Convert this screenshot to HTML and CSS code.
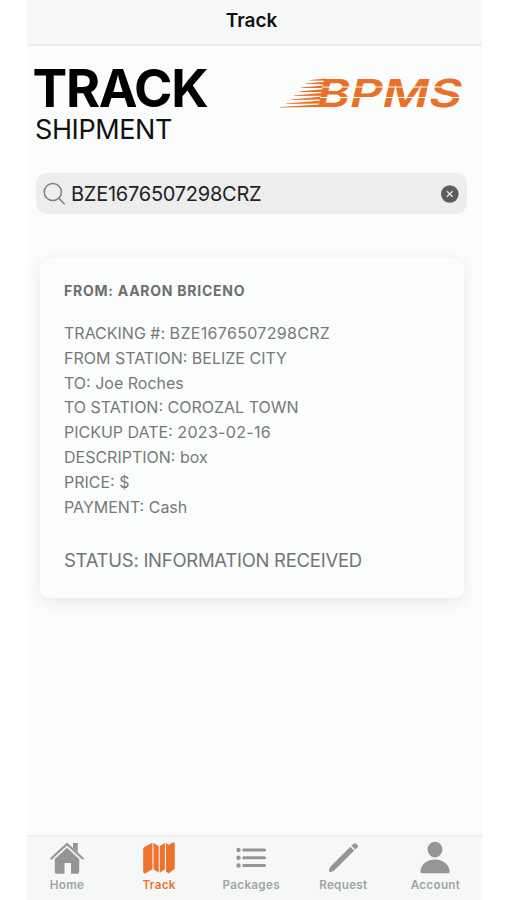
FILE: index.html
```html
<!DOCTYPE html>
<html lang="en">
<head>
<meta charset="utf-8">
<title>Track</title>
<link rel="stylesheet" href="styles.css">
</head>
<body>
<div class="app">
  <header class="navbar">Track</header>
  <main class="content">
    <div class="heading">
      <div class="titles">
        <h1>TRACK</h1>
        <p class="subtitle">SHIPMENT</p>
      </div>
      <svg class="logo" viewBox="0 0 184 32" width="184" height="32" aria-label="BPMS">
        <g fill="#ea7028">
          <path d="M31 3L47 1.400 46.500 3.700 31 3.500zM27 6.500L46 4.800 45.300 7.200 27 7zM22 10.500L45 8.400 44.300 10.900 22 11zM20 14.500L43.500 12.200 43 14.900 20 15zM15 18.500L42.500 16 42 18.700 15 19zM12 22.500L41.500 19.800 41 22.600 12 23zM7 26.500L40.500 23.800 40 26.500 7 27zM1 30L40 27.400 39.300 30 1 30.500z"/>
          <text class="logo-text" x="0" y="0" textLength="145" lengthAdjust="spacingAndGlyphs" transform="translate(35.500 29.600) skewX(-13)">BPMS</text>
        </g>
        <path d="M43 10H182M41 20.500H180" stroke="#fbfdfc" stroke-width="1"/>
      </svg>
    </div>
    <div class="search">
      <svg width="24" height="24" viewBox="0 0 24 24" fill="none" stroke="#7d7e7e" stroke-width="1.500" stroke-linecap="round"><circle cx="9.800" cy="10" r="8.600"/><path d="M15.900 16.400L21.200 21.700"/></svg>
      <span class="query">BZE1676507298CRZ</span>
      <svg class="clear" width="18" height="18" viewBox="0 0 18 18"><circle cx="8.800" cy="9" r="8.800" fill="#5c5d5d"/><path d="M6 6.200L11.600 11.800M11.600 6.200L6 11.800" stroke="#e8e8e8" stroke-width="1.300"/></svg>
    </div>
    <section class="card">
      <h2>FROM: AARON BRICENO</h2>
      <ul class="details">
        <li>TRACKING #: <span class="code">BZE1676507298CRZ</span></li>
        <li>FROM STATION: BELIZE CITY</li>
        <li>TO: Joe Roches</li>
        <li>TO STATION: COROZAL TOWN</li>
        <li>PICKUP DATE: <span class="code">2023-02-16</span></li>
        <li>DESCRIPTION: box</li>
        <li>PRICE: $</li>
        <li>PAYMENT: Cash</li>
      </ul>
      <p class="status">STATUS: INFORMATION RECEIVED</p>
    </section>
  </main>
  <nav class="tabs">
    <div class="tab">
      <svg width="36" height="36" viewBox="0 0 36 36"><path d="M24 3h4.800v9l-4.800-4z" fill="#949696"/><path d="M5.800 19L18 7.800 30.200 19V32q0 1.800-1.800 1.800H22V23H15.500V33.800H7.600Q5.800 33.800 5.800 32z" fill="#949696"/><path d="M2.300 18.500L18 4 33.700 18.500" fill="none" stroke="#949696" stroke-width="2.300" stroke-linecap="round" stroke-linejoin="round"/></svg>
      <span>Home</span>
    </div>
    <div class="tab active">
      <svg width="36" height="36" viewBox="0 0 36 36" fill="#ee7130"><path d="M11.400 2.700V29.300L4.500 33.200Q2.200 34 2.200 31.500V9Q2.200 7.600 3.400 6.900zM12.500 2.700L17.700 6.200V32.700L12.500 29.300zM18.800 6.200L23.900 2.700V29.300L18.800 32.700zM25 2.900L27.800 4.800 31.500 2.600Q33.800 1.800 33.800 4V27.700Q33.800 29 32.600 29.800L27.500 33.500 25 31.500z"/></svg>
      <span>Track</span>
    </div>
    <div class="tab">
      <svg width="36" height="36" viewBox="0 0 36 36" stroke="#949696" stroke-linecap="round"><path d="M10.800 10H31.500M10.800 17.700H31.500M10.800 25.500H31.500" stroke-width="3"/><path d="M5.500 10h.01M5.500 17.700h.01M5.500 25.500h.01" stroke-width="4.400"/></svg>
      <span>Packages</span>
    </div>
    <div class="tab">
      <svg width="36" height="36" viewBox="0 0 36 36" fill="#949696"><path d="M25.300 6.800L29.200 10.500 9.200 30.500 6.200 32Q3.500 32.500 4 29.800L5.300 26.800z"/><path d="M26.400 5.700L28 4.200Q30 2.700 32 4.500T32.200 7.800L30.400 9.500z"/></svg>
      <span>Request</span>
    </div>
    <div class="tab">
      <svg width="36" height="36" viewBox="0 0 36 36" fill="#949696"><ellipse cx="18" cy="9.600" rx="7.400" ry="7.800"/><path d="M3.300 31C4.600 23.600 10.500 19.600 18 19.600S31.400 23.600 32.700 31Q32.900 33.300 31 33.300H5Q3.100 33.300 3.300 31z"/></svg>
      <span>Account</span>
    </div>
  </nav>
</div>
</body>
</html>
```
FILE: styles.css
```css
* { box-sizing: border-box; }
body { margin: 0; background: #fff; font-family: Inter, "Liberation Sans", sans-serif; }
h1, h2, p, ul { margin: 0; padding: 0; }
.app { width: 455px; height: 900px; margin-left: 27px; display: flex; flex-direction: column; background: #fbfdfc; overflow: hidden; }
.navbar { flex: none; height: 46px; padding-right: 6px; background: #f6f8f7; border-bottom: 2px solid #ecefee; color: #111; font-size: 19px; font-weight: 600; line-height: 41px; text-align: center; }
.content { flex: 1; min-height: 0; }
.heading { display: flex; justify-content: space-between; padding: 17px 19px 0 7px; }
h1 { margin-left: -1.5px; font-size: 52px; line-height: 52px; font-weight: 700; letter-spacing: -1.3px; color: #000; white-space: nowrap; }
.subtitle { padding-left: 1px; margin-top: -1px; font-size: 27px; line-height: 32px; letter-spacing: -.4px; color: #111; white-space: nowrap; }
.logo { margin-top: 14px; overflow: visible; }
.logo-text { font-family: Inter, sans-serif; font-size: 38.500px; font-weight: 600; }
.search { display: flex; align-items: center; width: 431px; height: 41px; margin: 27px 0 0 9px; padding: 0 8px 0 7px; border-radius: 11px; background: #ededed; }
.query { flex: 1; padding-left: 4px; font-size: 20px; letter-spacing: -.25px; color: #222; white-space: nowrap; }
.card { width: 424px; height: 340px; margin: 44px 0 0 13px; padding: 22px 24px 0; border-radius: 10px; background: #fbfdfc; box-shadow: 0 4px 14px rgba(40, 45, 60, .09); color: #777978; }
h2 { font-size: 14px; line-height: 21px; letter-spacing: .75px; font-weight: 700; color: #6d6f6e; white-space: nowrap; }
.details { list-style: none; margin-top: 20px; font-size: 16px; line-height: 24.8px; white-space: nowrap; }
.code { letter-spacing: .32px; }
.status { margin-top: 29px; font-size: 18.500px; line-height: 24px; letter-spacing: -.27px; color: #737574; white-space: nowrap; }
.tabs { flex: none; display: grid; grid-template-columns: repeat(5, 92.1px); width: 461px; height: 65px; margin-left: -6px; padding-top: 3px; background: #f6f8f7; border-top: 2px solid #ecefee; }
.tab { display: flex; flex-direction: column; align-items: center; color: #a2a4a3; font-size: 11.700px; line-height: 15px; font-weight: 600; letter-spacing: .3px; }
.tab svg { display: block; margin-bottom: 2px; }
.tab.active { color: #ee7130; }
```
